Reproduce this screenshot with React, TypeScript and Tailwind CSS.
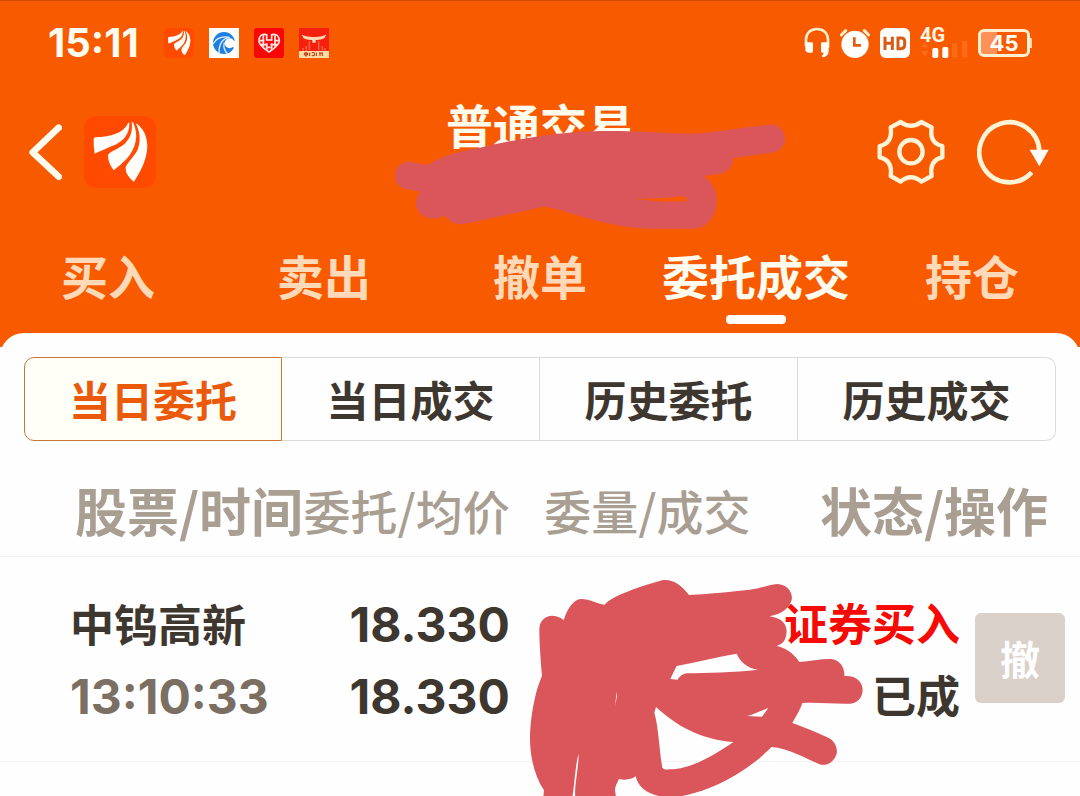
import React from "react";

const tabs = ["买入", "卖出", "撤单", "委托成交", "持仓"];
const segments = ["当日委托", "当日成交", "历史委托", "历史成交"];
const orders = [
  { name: "中钨高新", time: "13:10:33", price: "18.330", average: "18.330", side: "证券买入", state: "已成" },
];

function WingMark({ className }: { className: string }) {
  return (
    <svg viewBox="0 0 216 216" className={className} aria-hidden="true">
      <rect width="216" height="216" rx="36" fill="#ff4a00" />
      <g fill="#fffefa">
        <path d="M29 69 Q29 64 35 64 C80 62 118 52 133 20 L136 20 C138 58 112 80 84 90 C66 98 48 106 32 113 Q28 90 29 69Z" />
        <path d="M143 19 L147 19 C166 58 156 98 127 130 C114 143 101 153 89 163 C80 150 72 136 72 118 C74 106 104 101 125 80 C142 62 146 42 143 19Z" />
        <path d="M155 22 C176 33 190 60 190 92 C188 135 168 168 150 197 C135 186 124 172 125 153 C134 134 154 118 162 98 C172 70 166 42 155 22Z" />
      </g>
    </svg>
  );
}

function SwirlBadge() {
  return (
    <svg viewBox="0 0 90 90" className="size-[30px]" aria-hidden="true">
      <rect width="90" height="90" fill="#fffefa" />
      <circle cx="45" cy="45" r="33" fill="#1f7fe0" />
      <circle cx="62" cy="46" r="15" fill="#fffefa" />
      <path d="M70 42 L84 34 V62 L72 58Z" fill="#fffefa" />
      <path d="M12 48 C22 30 40 24 62 28 C44 30 30 42 30 76" fill="none" stroke="#d9efff" strokeWidth="4" />
      <path d="M46 44 C42 58 48 70 56 78" fill="none" stroke="#d9efff" strokeWidth="4" />
    </svg>
  );
}

function HeartBadge() {
  return (
    <svg viewBox="0 0 90 90" className="size-[30px]" aria-hidden="true">
      <rect width="90" height="90" rx="9" fill="#fb0606" />
      <g fill="none" stroke="#ffe9e4" strokeWidth="5">
        <path d="M36 20 C22 16 14 26 15 40 C17 54 34 64 45 72 C56 64 73 54 76 40 C77 26 68 16 54 20" />
        <path d="M28 22v34M38 18v20M38 46v20M53 18v20M53 46v20M63 22v34" />
        <path d="M17 38h14M20 50h20M60 38h14M50 50h20M40 58h10M38 36h15" />
      </g>
    </svg>
  );
}

function GateBadge() {
  return (
    <svg viewBox="0 0 90 90" className="size-[30px]" aria-hidden="true">
      <rect width="90" height="90" fill="#f5200f" />
      <path d="M8 20 Q26 28 45 27 Q64 28 82 20 L76 31 Q64 37 50 36 V44 H40 V36 Q24 37 14 31Z" fill="#ffd9b0" />
      <path d="M31 40v26M59 40v26M12 60v8M22 54v14M70 54v14M78 60v8" stroke="#ff6a48" strokeWidth="4" />
      <rect y="69" width="90" height="21" fill="#ffdca6" />
      <path d="M16 75h10v6H16zM21 72v14M32 74v10M38 74h8v9h-8M52 74v10M60 75h12M63 74v10M70 75v9" fill="none" stroke="#b5300c" strokeWidth="3" />
    </svg>
  );
}

function Headphones() {
  return (
    <svg viewBox="0 0 78 93" className="h-[31px] w-[26px]" aria-hidden="true">
      <path d="M6 58 V40 C6 18 20 6 39 6 C58 6 72 18 72 40 V62" fill="none" stroke="#fff0cf" strokeWidth="8" />
      <path d="M4 46 h19 q4 0 4 4 v23 q0 4-4 4 h-8 q-11 0-11-10Z M74 46 H55 q-4 0-4 4 v23 q0 4 4 4 h4 q-1 7-6 9 l3 5 C69 88 74 82 74 72Z" fill="#fffefa" />
    </svg>
  );
}

function AlarmClock() {
  return (
    <svg viewBox="0 0 90 90" className="size-[30px]" aria-hidden="true">
      <circle cx="45" cy="49" r="41" fill="#fffefa" />
      <path d="M4 21 L17 8 M86 21 L73 8" stroke="#fff0cf" strokeWidth="9" strokeLinecap="round" />
      <path d="M43 28 V52 H63" fill="none" stroke="#e85a10" strokeWidth="8" />
    </svg>
  );
}

function HdBadge() {
  return (
    <svg viewBox="0 0 90 90" className="size-[30px]" aria-hidden="true">
      <rect width="90" height="90" rx="17" fill="#fffefa" />
      <path d="M15 26v40M37 26v40M15 46h22M54 30v32h9q11 0 11-10V40q0-10-11-10Z" fill="none" stroke="#d85a18" strokeWidth="9" />
    </svg>
  );
}

function Signal() {
  return (
    <div className="relative h-[30px] w-12">
      <span className="absolute -top-px left-0 font-['Roboto',sans-serif] text-[20px] font-bold leading-4 text-[#fff6e2]">4G</span>
      <svg viewBox="0 0 144 90" className="absolute inset-0 h-[30px] w-12" aria-hidden="true">
        <path d="M14 44 L25 58 H3Z M14 87 L25 69 H3Z M96 50 q0-4 4-4 h8 q4 0 4 4 V88 H96Z M126 42 q0-4 4-4 h8 q4 0 4 4 V88 H126Z" fill="#ff6a18" />
        <rect x="37" y="60" width="18" height="30" rx="5" fill="#fffefa" />
        <rect x="67" y="57" width="18" height="33" rx="5" fill="#fffefa" />
      </svg>
    </div>
  );
}

function Battery() {
  return (
    <div className="flex items-center">
      <div className="flex h-7 w-[52px] items-center justify-center rounded-md border-[3px] border-[#fff0cf] bg-linear-to-r from-[#ff9058] from-35% to-[#f85a00] to-35% font-['Inter',sans-serif] text-[22px] font-bold leading-none text-[#fffefa]">
        45
      </div>
      <div className="h-2.5 w-0.5 bg-[#ffd9a8]" />
    </div>
  );
}

function Gear() {
  return (
    <svg viewBox="0 0 204 204" className="size-[68px]" aria-hidden="true">
      <g fill="none" stroke="#fff3d8" strokeWidth="13" strokeLinejoin="round">
        <path d="M71 12 L41 28 Q48 75 8 84 V118 Q48 127 41 174 L71 191 Q102 165 133 191 L164 174 Q156 127 196 118 V84 Q156 75 164 28 L133 12 Q102 35 71 12Z" />
        <circle cx="102" cy="101" r="35" />
      </g>
    </svg>
  );
}

function Refresh() {
  return (
    <svg viewBox="0 0 216 204" className="h-[68px] w-[72px]" aria-hidden="true">
      <path d="M164 163 A90 90 0 1 1 187 100" fill="none" stroke="#fff3d8" strokeWidth="14" />
      <path d="M158 95 H215 L187 145Z" fill="#fffefa" />
    </svg>
  );
}

function HeaderScribble() {
  return (
    <svg viewBox="0 0 1260 450" className="pointer-events-none absolute -left-[66px] -top-3 h-[150px] w-[420px]" aria-hidden="true">
      <path
        fill="#da565b"
        fillRule="evenodd"
        d="M45 258 C45 232 65 214 92 216 L145 225 C180 200 230 185 300 173 C400 150 520 128 640 124 C760 120 860 132 940 131 C1010 128 1080 112 1170 104 C1195 102 1215 122 1215 147 C1215 170 1197 187 1172 188 L1058 205 C1062 225 1045 247 1020 251 L972 258 C995 275 1010 300 1010 332 C1008 380 980 415 940 416 L820 416 C740 416 680 400 620 384 C570 370 530 355 492 350 C420 364 330 388 250 402 C228 405 208 395 196 377 C180 385 165 386 150 385 C120 380 105 355 108 335 C110 320 115 312 122 305 L90 299 C62 297 45 282 45 258Z M765 327 C830 324 870 325 908 318 C915 320 920 327 923 334 L850 335Z"
      />
    </svg>
  );
}

function VolumeScribble() {
  return (
    <svg viewBox="0 0 1050 708" className="pointer-events-none absolute left-2.5 top-1 z-10 h-[236px] w-[350px]" aria-hidden="true">
      <path
        fill="#da565b"
        fillRule="evenodd"
        d="M58 205 C58 180 75 165 97 164 C112 165 124 170 131 178 C140 150 155 120 180 114 C205 112 230 128 254 131 C275 105 370 72 430 57 C460 55 485 72 507 102 C580 98 630 92 690 86 C720 82 745 72 772 69 C797 70 816 88 816 112 C812 140 785 160 748 166 C780 170 800 185 800 212 C798 235 790 250 770 254 C800 262 822 278 838 303 C870 300 905 293 935 294 C960 298 975 320 973 345 C1005 342 1028 360 1028 387 C1027 412 1010 428 988 428 C940 429 900 424 847 426 C842 445 828 465 817 486 C850 497 890 515 925 530 C945 540 953 560 950 578 C942 602 925 614 903 611 C860 595 810 562 754 558 C710 605 620 670 520 697 C440 722 360 705 347 646 C335 656 315 658 297 654 C290 668 284 680 285 688 L288 708 H166 C162 680 176 620 176 578 C166 610 164 670 157 708 H70 L72 688 C40 640 30 580 30 530 C32 450 50 380 66 345 C62 300 58 250 58 205Z M470 315 C530 303 590 288 650 278 C660 300 680 322 714 326 C640 334 560 336 500 337 C485 340 478 348 473 356 L451 354 C458 340 463 328 470 315Z M408 438 C470 495 540 535 640 543 C580 585 510 625 450 625 C440 626 430 625 427 620 C418 570 416 500 403 455Z M682 465 C705 458 725 448 745 441 L726 467Z M290 392 L285 435 L291 405Z"
      />
    </svg>
  );
}

export default function App() {
  return (
    <div className="min-h-screen overflow-hidden bg-[#fffefe] font-['Noto_Sans_CJK_SC',sans-serif] text-[#3e372f]">
      <header className="border-t border-[#cc4a00] bg-[#f85a00] text-[#fffbee]">
        <div className="flex h-[83px] items-center justify-between pl-12 pr-12">
          <div className="flex items-center gap-[15px]">
            <span className="w-[101px] font-['Inter',sans-serif] text-[40px] font-bold leading-none">15:11</span>
            <WingMark className="size-[30px]" />
            <SwirlBadge />
            <HeartBadge />
            <GateBadge />
          </div>
          <div className="flex items-center gap-2.5">
            <Headphones />
            <AlarmClock />
            <HdBadge />
            <Signal />
            <Battery />
          </div>
        </div>

        <div className="grid h-[136px] grid-cols-[1fr_auto_1fr] items-center px-[28px]">
          <div className="flex items-center gap-[22px]">
            <button type="button" aria-label="返回">
              <svg viewBox="0 0 102 180" className="h-[60px] w-[34px]" aria-hidden="true">
                <path d="M92 17 L14 91 L92 164" fill="none" stroke="#fffbee" strokeWidth="20" strokeLinecap="round" strokeLinejoin="round" />
              </svg>
            </button>
            <button type="button" aria-label="首页">
              <WingMark className="size-[72px]" />
            </button>
          </div>
          <div className="relative self-start pt-4">
            <h1 className="text-[47px] font-bold leading-[48px]">普通交易</h1>
            <div className="absolute left-0 top-[18px]">
              <HeaderScribble />
            </div>
          </div>
          <div className="flex items-center justify-end gap-8 pr-[3px]">
            <button type="button" aria-label="设置">
              <Gear />
            </button>
            <button type="button" aria-label="刷新">
              <Refresh />
            </button>
          </div>
        </div>

        <nav className="grid grid-cols-5 pb-[23px] pt-[27px]">
          {tabs.map((tab) => {
            const active = tab === "委托成交";
            return (
              <a key={tab} href="#" className="flex flex-col items-center gap-3 whitespace-nowrap">
                <span className={active ? "text-[47px] font-bold leading-[56px]" : "text-[47px] font-bold leading-[56px] text-[#ffd9b8]"}>{tab}</span>
                <span className={active ? "h-[9px] w-[60px] rounded bg-[#fffefa]" : "h-[9px] w-[60px]"} />
              </a>
            );
          })}
        </nav>
      </header>

      <main className="-mt-[14px] rounded-t-[24px] bg-[#fffefe] pt-6">
        <div className="mx-6 grid h-[84px] grid-cols-4">
          {segments.map((label, i) => (
            <button
              key={label}
              type="button"
              className={
                i === 0
                  ? "rounded-l-[10px] border border-[#c8793a] bg-[#fffff7] text-[42px] font-bold leading-none text-[#eb5a0a]"
                  : "border-y border-r border-[#dedad8] text-[42px] font-bold leading-none last:rounded-r-[10px]"
              }
            >
              {label}
            </button>
          ))}
        </div>

        <table className="w-full table-fixed">
          <colgroup>
            <col className="w-[27.8%]" />
            <col className="w-[19.4%]" />
            <col className="w-[22.3%]" />
            <col />
          </colgroup>
          <thead>
            <tr className="h-[115px] whitespace-nowrap border-b border-[#f5f3f1] text-[47px] leading-[60px] text-[#a99e92]">
              <th className="overflow-hidden pl-[75px] pt-6 text-left text-[52px] font-bold">股票/时间</th>
              <th className="pt-6 text-right font-medium">委托/均价</th>
              <th className="pt-6 text-right font-medium">委量/成交</th>
              <th className="pr-8 pt-6 text-right text-[52px] font-bold">状态/操作</th>
            </tr>
          </thead>
          <tbody>
            {orders.map((order) => (
              <tr key={order.time} className="h-[205px] whitespace-nowrap border-b border-[#f5f3f1] align-top text-[44px] font-bold leading-[72px]">
                <td className="pl-[70px] pt-[30px]">
                  <div>{order.name}</div>
                  <div className="font-['Inter',sans-serif] text-[48px] leading-[76px] text-[#7b6e62]">{order.time}</div>
                </td>
                <td className="pt-8 text-right font-['Inter',sans-serif] text-[48px]">
                  <div>{order.price}</div>
                  <div>{order.average}</div>
                </td>
                <td className="relative">
                  <VolumeScribble />
                </td>
                <td className="pr-[15px] pt-[29px]">
                  <div className="flex items-center justify-end gap-[15px]">
                    <div className="text-right">
                      <div className="text-[#f50a05]">{order.side}</div>
                      <div>{order.state}</div>
                    </div>
                    <button type="button" className="size-[90px] rounded-md bg-[#d9d0ca] text-[40px] font-bold leading-none text-[#fffefe]">
                      撤
                    </button>
                  </div>
                </td>
              </tr>
            ))}
          </tbody>
        </table>
      </main>
    </div>
  );
}
